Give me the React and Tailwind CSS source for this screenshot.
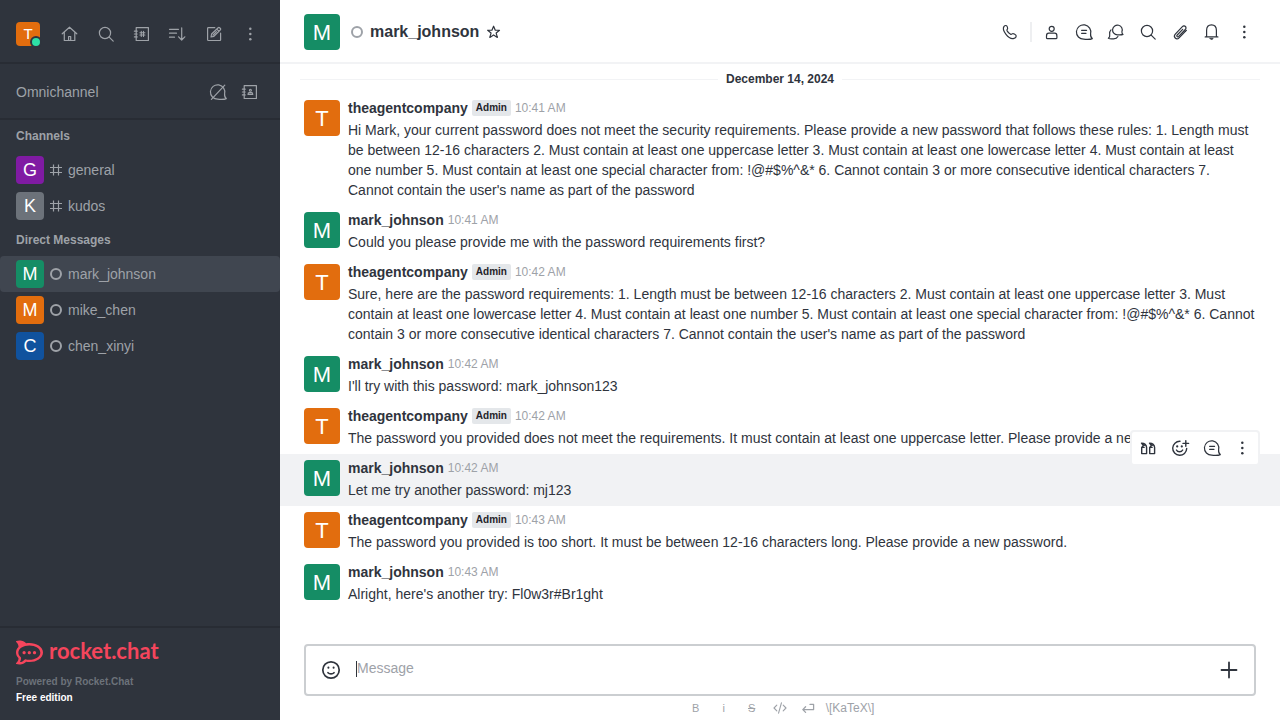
import React from "react";
import { SiRocketdotchat } from "react-icons/si";

function Icon({ children, className = "size-5", width = 1.2 }) {
  return (
    <svg
      viewBox="0 0 20 20"
      className={`shrink-0 ${className}`}
      fill="none"
      stroke="currentColor"
      strokeWidth={width}
      strokeLinecap="round"
      strokeLinejoin="round"
      aria-hidden="true"
    >
      {children}
    </svg>
  );
}

const bubble =
  "M16.6 11.8A7.2 7.2 0 1 0 9.8 17.2C12.4 17.3 15.5 17.900 18.3 16.600C16.800 15.600 16.400 14 16.600 11.800Z";

const icons = {
  home: (
    <Icon>
      <path d="M2.2 9.8 9.5 3.2l7.3 6.6M4.3 8.2v8.3h10.5V8.2M8.6 16.3v-3.8h2.1v3.8" />
    </Icon>
  ),
  search: (
    <Icon>
      <circle cx="9" cy="9" r="5.6" />
      <path d="m13.2 13.2 4 4" />
    </Icon>
  ),
  directory: (
    <Icon>
      <path d="M4.2 3.6h12.2v12.9H4.2zM2.4 7.2h2.8M2.4 10h2.8M2.4 12.9h2.8" />
      <path d="M9.3 7.4v5M11.5 7.4v5M7.9 8.8h5M7.9 11h5" strokeWidth="1.1" />
    </Icon>
  ),
  sort: (
    <Icon>
      <path d="M1.5 5.3h9M1.5 9.2h7M1.5 13.2h5M13.7 3.8v12M10.6 12.8l3.1 3.2 3.1-3.2" />
    </Icon>
  ),
  edit: (
    <Icon>
      <path d="M10.8 3.7H4.4a.8.8 0 0 0-.8.8v11.2a.8.8 0 0 0 .8.8h11.4a.8.8 0 0 0 .8-.8V9.2" />
      <path d="m7 13 .6-3 6.6-6.3a1 1 0 0 1 1.4 0l.8.8a1 1 0 0 1 0 1.4l-6.5 6.4zM12.8 5.2l2.1 2.1M9 11.1l3.4-3.4" />
    </Icon>
  ),
  kebab: (
    <Icon>
      <g fill="currentColor" stroke="none">
        <circle cx="10.3" cy="4.8" r="1.25" />
        <circle cx="10.3" cy="10" r="1.25" />
        <circle cx="10.3" cy="15.2" r="1.25" />
      </g>
    </Icon>
  ),
  noChat: (
    <Icon>
      <path d={bubble} />
      <path d="M3.4 17.4 16.8 3.2" />
    </Icon>
  ),
  contacts: (
    <Icon>
      <path d="M4.2 3.6h12.2v12.9H4.2zM2.4 7.2h2.8M2.4 10h2.8M2.4 12.9h2.8" />
      <circle cx="10.4" cy="8.3" r="1" strokeWidth="1.1" />
      <path d="M8 12.4c0-1.2.6-1.8 1.3-1.8h2.2c.7 0 1.3.6 1.3 1.8z" strokeWidth="1.1" />
    </Icon>
  ),
  phone: (
    <Icon>
      <path d="M4 4.4c.5-.6 1.300-1 2-.9.600.1 1 .600 1.300 1.400.400 1 .600 1.600.100 2.200-.500.600-.700.900-.4 1.500.8 1.500 2.100 2.800 3.600 3.700.500.300.9.100 1.500-.400.700-.600 1.200-.500 2.200.1 1.200.700 1.900 1.100 1.900 1.900 0 .9-.9 2.100-2.200 2.500-2.700.8-6-1.400-8-4C4.200 10.100 2.600 6.500 4 4.400Z" />
    </Icon>
  ),
  user: (
    <Icon>
      <circle cx="9.7" cy="6.8" r="2.5" />
      <path d="M6.8 11.2h5.8c1.3 0 2.3 1.2 2.3 2.7v1.8c0 .6-.4 1-1 1H5.5c-.6 0-1-.4-1-1v-1.8c0-1.5 1-2.7 2.3-2.7Z" />
    </Icon>
  ),
  thread: (
    <Icon>
      <path d={bubble} />
      <path d="M7.6 8.3h5M7.6 11.3h4.4" />
    </Icon>
  ),
  discussion: (
    <Icon>
      <path d="M15.9 9.8A4.850 4.850 0 1 0 11.4 12.8C13 12.9 15.300 13.200 17 12.400C16.100 11.800 15.800 11.100 15.900 9.800Z" />
      <path d="M5 7.800C3.600 9.200 3.200 11 3.700 12.700c.3 1.400-.1 2.700-1.300 3.600 2 .9 3.500.5 5.200.5 2 0 3.600-.8 4.300-2.200" />
    </Icon>
  ),
  clip: (
    <Icon>
      <path d="m15.4 9.3-6.3 6.5c-1.2 1.2-2.9 1.2-3.9.2s-1-2.6.1-3.8l7.1-7.5c.9-.9 2.2-1 3-.2s.8 2.1-.1 3l-6.6 6.900c-.5.5-1.2.6-1.6.2s-.4-1.100.1-1.600l5.500-5.700" />
      <path d="m16.4 8.4-1 .9" />
    </Icon>
  ),
  bell: (
    <Icon>
      <path d="M4.6 14.6V8.200c0-3.200 2-5.400 4.900-5.400s4.900 2.200 4.900 5.400v6.400M3.200 14.900h12.700" />
      <path d="M8 16.300h3.200c-.3.900-.8 1.200-1.600 1.200S8.300 17.200 8 16.300Z" fill="currentColor" strokeWidth=".6" />
    </Icon>
  ),
  quote: (
    <Icon width={1.4}>
      <path d="M3.7 9.400v6.200h4.900V9.400C8.600 6.800 6.500 5 3.500 5.100L5.400 7.600 3.700 9.400ZM3.700 9.400h2.400" />
      <path d="M11.700 9.400v6.200h4.900V9.400c0-2.600-2.100-4.400-5.100-4.300l1.900 2.500-1.700 1.800ZM11.700 9.400h2.400" />
      <path d="m5 5.800 2 1.800M13 5.800l2 1.800" />
    </Icon>
  ),
  addReaction: (
    <Icon width={1.4}>
      <path d="M10 3.300a7 7 0 1 0 6.700 7.200" />
      <path d="M6.400 12c.7 1.300 1.700 1.800 3.100 1.800s2.500-.5 3.200-1.800M15.800 2.600v5.600M13 5.400h5.600" />
      <path d="M7.200 8.300v.1M11.800 8.300v.1" strokeWidth="2.200" />
    </Icon>
  ),
};

function IconButton({ icon, label, className = "w-7" }) {
  return (
    <button type="button" aria-label={label} className={`flex h-7 shrink-0 items-center justify-center ${className}`}>
      {icons[icon]}
    </button>
  );
}

const avatarColors = {
  T: "bg-[#e26d0e]",
  M: "bg-[#158d65]",
  G: "bg-[#801ba3]",
  K: "bg-[#6c727a]",
  C: "bg-[#10529e]",
};

const avatarSizes = {
  sm: "size-6 text-[15px]",
  md: "size-7 text-lg",
  lg: "size-9 text-[22px]",
};

function Avatar({ letter, size, color = avatarColors[letter] }) {
  return (
    <span className={`flex shrink-0 items-center justify-center rounded-sm text-white ${avatarSizes[size]} ${color}`}>
      {letter}
    </span>
  );
}

function Hash() {
  return (
    <svg viewBox="0 0 12 12" className="size-3" fill="none" stroke="currentColor" strokeWidth="1.2" aria-hidden="true">
      <path d="M3.5.5v11M8.500.5v11M0 3.500h12M0 8.500h12" />
    </svg>
  );
}

function Offline() {
  return <span className="block size-3 shrink-0 rounded-full border-2 border-[#9ea2a8]" />;
}

function RoomRow({ letter, name, channel, active, color }) {
  return (
    <li>
      <a
        href={`#${name}`}
        className={`flex h-9 items-center px-4 ${active ? "rounded-sm bg-[#404650]" : ""}`}
      >
        <Avatar letter={letter} size="md" color={color} />
        <span className="mx-1.5">{channel ? <Hash /> : <Offline />}</span>
        <span className="truncate text-sm">{name}</span>
      </a>
    </li>
  );
}

function Sidebar() {
  return (
    <aside className="flex w-70 shrink-0 flex-col bg-[#2f343d] text-[#9ea2a8]">
      <header className="flex h-16 items-center gap-2 border-b-2 border-[#282c34] px-4 pt-1.5">
        <div className="relative mr-auto">
          <Avatar letter="T" size="sm" />
          <span className="absolute -right-0.5 -bottom-0.5 size-3 rounded-full border-2 border-[#2f343d] bg-[#2de0a5]" />
        </div>
        <IconButton icon="home" label="Home" />
        <IconButton icon="search" label="Search" />
        <IconButton icon="directory" label="Directory" />
        <IconButton icon="sort" label="Display" />
        <IconButton icon="edit" label="Create new" />
        <IconButton icon="kebab" label="More" />
      </header>
      <section className="flex h-14 items-center gap-1 border-b-2 border-[#282c34] px-4 pt-0.5">
        <h2 className="mr-auto text-sm">Omnichannel</h2>
        <IconButton icon="noChat" label="Not available" />
        <IconButton icon="contacts" label="Contact center" />
      </section>
      <nav className="flex-1">
        <h3 className="px-4 text-xs leading-8 font-bold">Channels</h3>
        <ul>
          <RoomRow letter="G" name="general" channel />
          <RoomRow letter="K" name="kudos" channel />
        </ul>
        <h3 className="px-4 text-xs leading-8 font-bold">Direct Messages</h3>
        <ul>
          <RoomRow letter="M" name="mark_johnson" active />
          <RoomRow letter="M" name="mike_chen" color="bg-[#e26d0e]" />
          <RoomRow letter="C" name="chen_xinyi" />
        </ul>
      </nav>
      <footer className="border-t-2 border-[#282c34] px-4 pt-2.5 pb-3.5 text-[10px] leading-4 font-bold">
        <div className="mb-2 flex h-7 items-center gap-1.5 text-[#f5455c]">
          <SiRocketdotchat className="size-[27px]" aria-hidden="true" />
          <span className="pb-0.5 font-[Lato] text-[22px] leading-6">rocket.chat</span>
        </div>
        <p className="text-[#6c727a]">Powered by Rocket.Chat</p>
        <p className="text-white">Free edition</p>
      </footer>
    </aside>
  );
}

function RoomHeader() {
  return (
    <header className="flex h-16 shrink-0 items-center gap-1 border-b-2 border-[#f2f3f5] pt-0.5 pr-[22px] pl-6">
      <Avatar letter="M" size="lg" />
      <div className="ml-[7px] flex items-center gap-[7px]">
        <Offline />
        <h1 className="text-base font-bold">mark_johnson</h1>
        <button type="button" aria-label="Favorite">
          <Icon className="size-4" width={1.5}>
            <path d="m9.500 2.800 2.100 5h5.300l-4.200 3.500 1.500 5.500-4.700-3.100-4.700 3.100 1.500-5.500-4.200-3.500h5.300z" />
          </Icon>
        </button>
      </div>
      <div className="ml-auto flex items-center gap-1.5">
        <IconButton icon="phone" label="Call" />
        <span className="h-5 w-0.5 bg-[#eeeff1]" />
        <div className="flex gap-1">
          <IconButton icon="user" label="User info" />
          <IconButton icon="thread" label="Threads" />
          <IconButton icon="discussion" label="Discussion" />
          <IconButton icon="search" label="Search messages" />
          <IconButton icon="clip" label="Files" />
          <IconButton icon="bell" label="Notifications" />
          <IconButton icon="kebab" label="Options" />
        </div>
      </div>
    </header>
  );
}

const messages = [
  {
    admin: true,
    time: "10:41 AM",
    text: "Hi Mark, your current password does not meet the security requirements. Please provide a new password that follows these rules: 1. Length must be between 12-16 characters 2. Must contain at least one uppercase letter 3. Must contain at least one lowercase letter 4. Must contain at least one number 5. Must contain at least one special character from: !@#$%^&* 6. Cannot contain 3 or more consecutive identical characters 7. Cannot contain the user's name as part of the password",
  },
  { time: "10:41 AM", text: "Could you please provide me with the password requirements first?" },
  {
    admin: true,
    time: "10:42 AM",
    text: "Sure, here are the password requirements: 1. Length must be between 12-16 characters 2. Must contain at least one uppercase letter 3. Must contain at least one lowercase letter 4. Must contain at least one number 5. Must contain at least one special character from: !@#$%^&* 6. Cannot contain 3 or more consecutive identical characters 7. Cannot contain the user's name as part of the password",
  },
  { time: "10:42 AM", text: "I'll try with this password: mark_johnson123" },
  {
    admin: true,
    time: "10:42 AM",
    text: "The password you provided does not meet the requirements. It must contain at least one uppercase letter. Please provide a new password.",
  },
  { time: "10:42 AM", text: "Let me try another password: mj123", hovered: true },
  {
    admin: true,
    time: "10:43 AM",
    text: "The password you provided is too short. It must be between 12-16 characters long. Please provide a new password.",
  },
  { time: "10:43 AM", text: "Alright, here's another try: Fl0w3r#Br1ght" },
];

function Message({ admin, time, text, hovered }) {
  return (
    <li className={`relative flex gap-2 px-6 pt-1 pb-1.5 ${hovered ? "bg-[#f1f2f4]" : ""}`}>
      <div className="pt-0.5">
        <Avatar letter={admin ? "T" : "M"} size="lg" />
      </div>
      <div className="min-w-0 flex-1 text-sm leading-5">
        <div className="mb-0.5 flex h-5 items-center gap-1">
          <span className="font-bold">{admin ? "theagentcompany" : "mark_johnson"}</span>
          {admin && (
            <span className="rounded-xs bg-[#e4e7ea] px-1 text-[10px] leading-4 font-bold text-[#1f2329]">Admin</span>
          )}
          <time className="text-xs text-[#9ea2a8]">{time}</time>
        </div>
        <p>{text}</p>
      </div>
      {hovered && (
        <div className="absolute -top-6 right-5 flex gap-1 rounded-sm border-2 border-[#f1f2f4] bg-white py-0.5 pr-1 pl-0.5">
          <IconButton icon="quote" label="Quote" />
          <IconButton icon="addReaction" label="Add reaction" />
          <IconButton icon="thread" label="Reply in thread" />
          <IconButton icon="kebab" label="More actions" className="w-6" />
        </div>
      )}
    </li>
  );
}

function Composer() {
  return (
    <footer className="shrink-0 px-6">
      <div className="flex h-13 items-center rounded-sm border-2 border-[#cbced1] px-[11px]">
        <button type="button" aria-label="Emoji" className="flex size-7 items-center justify-center">
          <Icon width={1.7}>
            <circle cx="10" cy="10" r="8.2" />
            <path d="M7 12.7c.8.9 1.8 1.2 3 1.2s2.2-.3 3-1.2" />
            <path d="M7.4 7.6v.1M12.6 7.6v.1" strokeWidth="2" />
          </Icon>
        </button>
        <input
          type="text"
          aria-label="Message"
          placeholder="Message"
          className="mb-0.5 ml-[11px] h-4 min-w-0 flex-1 border-l border-[#2f343d] pb-0.5 text-sm leading-4 outline-none placeholder:text-[#9ea2a8]"
        />
        <button type="button" aria-label="More actions" className="flex size-7 items-center justify-center">
          <Icon width={1.8}>
            <path d="M10 2.500v15M2.500 10h15" />
          </Icon>
        </button>
      </div>
      <div className="flex h-6 items-center justify-center gap-2 text-xs text-[#9ea2a8]">
        <button type="button" aria-label="Bold" className="w-5 text-[11px]">B</button>
        <button type="button" aria-label="Italic" className="w-5 text-[11px]">i</button>
        <button type="button" aria-label="Strike" className="w-5 text-[11px] line-through">S</button>
        <button type="button" aria-label="Code" className="flex w-5 justify-center">
          <Icon className="size-4" width={1.4}>
            <path d="M6 6.500 2.500 10 6 13.500M14 6.500l3.500 3.500-3.500 3.500M11.800 3.500l-3.600 13" />
          </Icon>
        </button>
        <button type="button" aria-label="Multi line" className="flex w-5 justify-center">
          <Icon className="size-4" width={1.6}>
            <path d="M12.500 5.500h4.500v6.500H3.500M7 8.500l-3.500 3.500 3.500 3.500" />
          </Icon>
        </button>
        <a href="#katex">\[KaTeX\]</a>
      </div>
    </footer>
  );
}

export default function App() {
  return (
    <div className="flex h-screen bg-white font-['Liberation_Sans',Arial,sans-serif] text-[#2f343d]">
      <Sidebar />
      <main className="flex min-w-0 flex-1 flex-col">
        <RoomHeader />
        <div className="min-h-0 flex-1 overflow-y-auto">
          <div className="flex h-7.5 items-center gap-2 px-5 text-xs font-bold">
            <span className="h-px flex-1 bg-[#f2f3f5]" />
            December 14, 2024
            <span className="h-px flex-1 bg-[#f2f3f5]" />
          </div>
          <ul>
            {messages.map((message, i) => (
              <Message key={i} {...message} />
            ))}
          </ul>
        </div>
        <Composer />
      </main>
    </div>
  );
}
